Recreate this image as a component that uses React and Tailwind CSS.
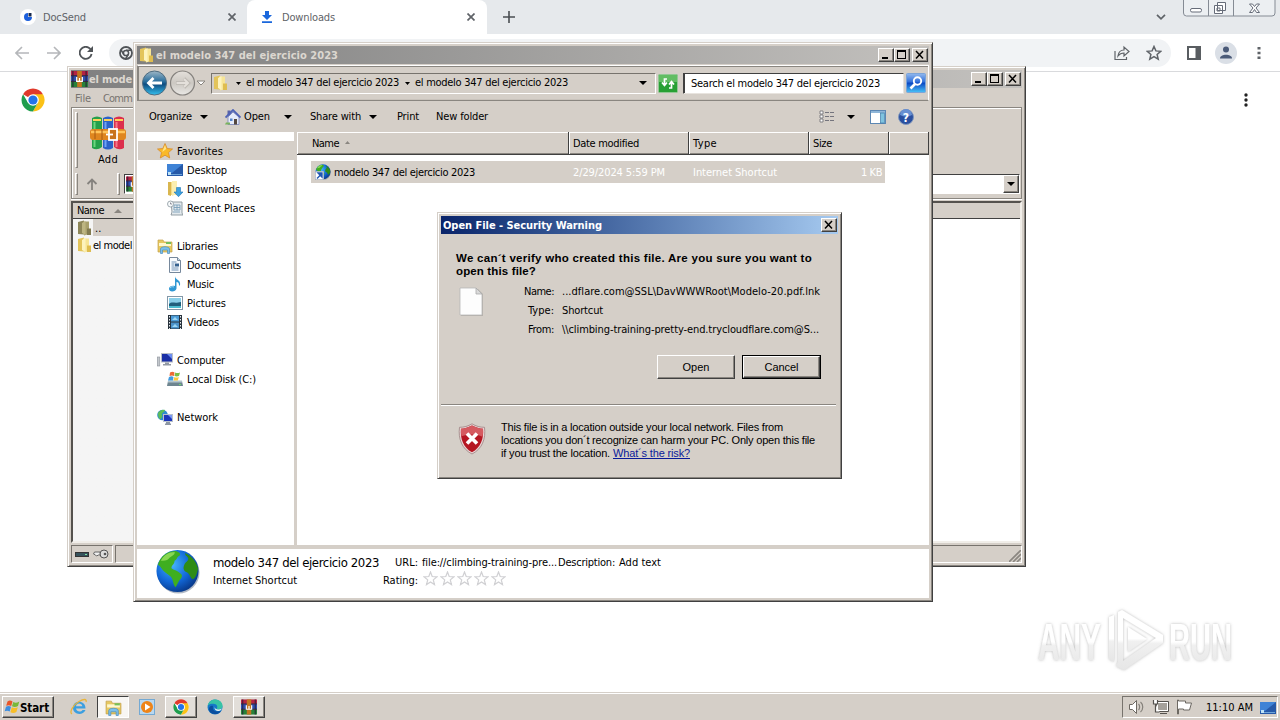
import React, { useLayoutEffect, useRef, useState } from "react";

const raised =
  "border border-t-white border-l-white border-r-[#404040] border-b-[#404040] shadow-[inset_-1px_-1px_0_#8a8680]";
const sunken =
  "border border-t-[#77736d] border-l-[#77736d] border-r-white border-b-white";
const grip =
  "w-[3px] border border-t-white border-l-white border-r-[#8a8680] border-b-[#8a8680]";
const frame =
  "border border-t-[#d5cfc8] border-l-[#d5cfc8] border-r-[#404040] border-b-[#404040] shadow-[inset_1px_1px_0_#fff,inset_-1px_-1px_0_#8a8680] bg-[#d5cfc8] p-[3px]";

// Label with a fixed pixel width: the tracking is adjusted so the text fills it
const Label = ({ w, className = "", children }) => {
  const ref = useRef(null);
  const [spacing, setSpacing] = useState(0);

  useLayoutEffect(() => {
    const natural = ref.current.getBoundingClientRect().width;
    setSpacing((w - natural) / String(children).length);
  }, [w, children]);

  return (
    <span className={`block shrink-0 whitespace-pre ${className}`}>
      <span ref={ref} style={{ letterSpacing: `${spacing}px` }}>
        {children}
      </span>
    </span>
  );
};

const Tri = ({ className = "" }) => (
  <svg viewBox="0 0 8 4" className={`h-1 w-2 shrink-0 ${className}`}>
    <path d="M0 0h8L4 4z" fill="#000" />
  </svg>
);

const ChromeLogo = ({ className = "" }) => (
  <svg viewBox="0 0 24 24" className={`shrink-0 ${className}`}>
    <circle cx="12" cy="12" r="11.5" fill="#fff" />
    <path d="M12 12 2.050 6.250A11.500 11.500 0 0 1 21.950 6.250z" fill="#e0392b" />
    <path d="M12 6.300h10A11.500 11.500 0 0 1 11.900 23.500l5-8.800z" fill="#fbc116" />
    <path d="M7 14.800 2.050 6.250A11.500 11.500 0 0 0 11.900 23.500l5-8.700z" fill="#1f9d4d" />
    <circle cx="12" cy="12" r="5.8" fill="#fff" />
    <circle cx="12" cy="12" r="4.6" fill="#2373e8" />
  </svg>
);

const Folder = ({ className = "", dark = false }) => (
  <svg viewBox="0 0 16 16" className={`h-4 w-4 shrink-0 ${className}`}>
    <path d="M1 2 7 .5v14L1 14z" fill={dark ? "#8d8659" : "#e3c45a"} />
    <path d="M6 1.500h6V14l-5 1.500z" fill={dark ? "#a8a06c" : "#f7e596"} />
    <path d="M5 3 8.500 1v14L5 13z" fill={dark ? "#bdb582" : "#fdf3bd"} />
    <path d="M10 8.500h4V15h-4z" fill={dark ? "#827b50" : "#dfbd50"} />
  </svg>
);

const Books = ({ className = "" }) => (
  <svg viewBox="0 0 36 34" className={`shrink-0 ${className}`}>
    <path d="M2 2q5-3 10 0v29q-5 4-10 1z" fill="#25a04a" />
    <path d="M13 2q5-3 10 0v30q-5 3-10 0z" fill="#2d62c8" />
    <path d="M24 2q5-3 10 0v30q-5 3-10-1z" fill="#dc2f4d" />
    <path d="M3 4h8M14 4h8M25 4h8" stroke="#ffd25b" strokeWidth="2" />
    <path d="M4.500 6v25" stroke="#6bd57e" strokeWidth="2" />
    <path d="M15.500 6v25" stroke="#6fa2f4" strokeWidth="2" />
    <path d="M26.500 6v25" stroke="#f77689" strokeWidth="2" />
    <rect x="0" y="13" width="36" height="11" rx="3" fill="#df861f" />
    <path d="M1 16h34" stroke="#ffc45a" strokeWidth="2.500" />
    <path d="M12 13v11M5 14v9" stroke="#a65a12" strokeWidth="1" />
    <rect x="19" y="13" width="8" height="11" fill="#c8741c" stroke="#fff" strokeWidth="1.800" />
    <path d="M16 18.500h7" stroke="#fff" strokeWidth="1.800" />
  </svg>
);

const BooksFlat = ({ className = "" }) => (
  <svg viewBox="0 0 18 17" className={`shrink-0 ${className}`}>
    <rect x="0" y="0" width="18" height="5" fill="#b32344" />
    <rect x="0" y="5" width="18" height="6" fill="#2f4fae" />
    <rect x="0" y="11" width="18" height="6" fill="#27823a" />
    <path d="M2 0v17M16 0v17" stroke="#231a33" strokeWidth="1" />
    <path d="M0 5h18M0 11h18" stroke="#33203a" strokeWidth="1" />
    <rect x="6.500" y="0" width="5" height="17" fill="#c2761f" />
    <path d="M6 6.500v4.500h6V6.500M9 7.500V11" fill="none" stroke="#fff" strokeWidth="1.300" />
  </svg>
);

const Globe = ({ className = "" }) => (
  <svg viewBox="0 0 46 46" className={`shrink-0 ${className}`}>
    <defs>
      <radialGradient id="sea" cx="0.38" cy="0.35" r="0.68">
        <stop offset="0" stopColor="#46b4fb" />
        <stop offset="0.6" stopColor="#1268d8" />
        <stop offset="1" stopColor="#083a8c" />
      </radialGradient>
    </defs>
    <circle cx="24" cy="24" r="21.5" fill="#64748b" opacity="0.5" />
    <circle cx="23" cy="22.5" r="21.5" fill="url(#sea)" />
    <path d="M3 16C6 6 14 2 21 2c3 1 6 2 4 5-3 1-2 4-5 5 0 4-4 5-3 8 3 2 6 2 9 5 3 2 1 5-1 7-2 3-3 6-4 7-3-3-2-8-5-11-4-3-8-5-10-9-1-2-2-2-3-3z" fill="#3fae20" />
    <path d="M31 4c6 3 11 8 13 16-1 5-2 9-5 11-3-1-3-5-6-7-3-1-5-4-3-8 1-3 4-3 4-6s-4-3-3-6z" fill="#2e8c16" />
    <path d="M6 12C9 6 14 3 20 3c1 3-4 4-6 7-2 2-5 2-8 2z" fill="#a8e868" opacity="0.7" />
  </svg>
);

const LibraryIcon = ({ className = "h-4 w-4" }) => (
  <svg viewBox="0 0 16 16" className={`shrink-0 ${className}`}>
    <path d="M1 2h5l1 2h8v10H1z" fill="#e6c860" stroke="#c3a04b" strokeWidth=".7" />
    <path d="M2 5h12v3H2z" fill="#fff7cc" />
    <path d="M9 4h5v2H9z" fill="#75bf5a" />
    <path d="M3.500 15.500V11c0-3 9-3 9 0v4.500h-2V12h-5v3.500z" fill="#7cc0ea" stroke="#4a8fc4" strokeWidth=".7" />
  </svg>
);

const DesktopIcon = ({ className = "" }) => (
  <svg viewBox="0 0 16 12" className={`h-3 w-4 shrink-0 ${className}`}>
    <rect width="16" height="12" fill="#2659a8" />
    <path d="M0 0h16L5 9H0z" fill="#3f83d6" />
    <path d="M1 10.500h14" stroke="#6fa5da" strokeWidth="1" />
    <rect x="1" y="8" width="3" height="3" fill="#bfe3f7" />
  </svg>
);

const sideIcons = {
  star: (
    <svg viewBox="0 0 16 16" className="h-4 w-4">
      <path d="m8 .5 2.200 5 5.300.5-4 3.600 1.200 5.400L8 12.200 3.300 15l1.200-5.400L.5 6l5.300-.5z" fill="#f9b929" stroke="#d98b2b" strokeWidth=".8" />
      <path d="m8 2 1.200 4-4 3z" fill="#ffe38a" />
    </svg>
  ),
  desktop: <DesktopIcon />,
  downloads: (
    <svg viewBox="0 0 16 16" className="h-4 w-4">
      <path d="M1 1h9v13H1z" fill="#f4dc85" />
      <path d="M1 1h3v14l-3-1z" fill="#d9b64f" />
      <path d="M5 0h5v13l-5 2z" fill="#fbeeb0" />
      <path d="M9.500 6.500h4V11H16l-4.500 4.700L7 11h2.500z" fill="#3ba0df" stroke="#2476b4" strokeWidth=".6" />
    </svg>
  ),
  recent: (
    <svg viewBox="0 0 16 16" className="h-4 w-4">
      <path d="M4 2h11v11l1 2H4l1-3z" fill="#e3e9ed" stroke="#89949b" strokeWidth=".9" />
      <path d="M7 5h6v5H7zM10 5v5M7 7.500h6M6 12h7" stroke="#7b9fba" fill="none" strokeWidth=".9" />
      <circle cx="3.500" cy="4" r="3" fill="#f7fafb" stroke="#8a979e" strokeWidth=".8" />
      <path d="M3.500 2.500V4H5" stroke="#667" fill="none" strokeWidth=".7" />
    </svg>
  ),
  library: <LibraryIcon />,
  documents: (
    <svg viewBox="0 0 16 16" className="h-4 w-4">
      <path d="M2.500.5h8l3 3v12h-11z" fill="#fafcff" stroke="#76889c" />
      <path d="M10.500.5v3h3" fill="#c8dbec" stroke="#76889c" />
      <path d="M4.500 5h5M4.500 7h3M4.500 9h3M4.500 11h7M4.500 13h7" stroke="#6f90b5" />
      <rect x="8" y="6.500" width="4" height="3" fill="#37618f" />
    </svg>
  ),
  music: (
    <svg viewBox="0 0 16 16" className="h-4 w-4">
      <path d="M8 0c0 4 6 3.500 5 9-.5 1-1 1-1 0 0-2-1-3-2.500-3v6.500C9 16 2 17 2 12.800 2 10 5.500 9.200 8 10z" fill="#2e97d4" />
      <path d="M3 12c1-1.500 2.500-1.500 4-1" stroke="#93d3f3" fill="none" />
    </svg>
  ),
  pictures: (
    <svg viewBox="0 0 16 14" className="h-3.5 w-4">
      <rect x=".5" y=".5" width="15" height="13" fill="#fff" stroke="#8398a8" />
      <rect x="2" y="2" width="12" height="10" fill="#89cfe9" />
      <path d="M2 8c3-3 5 0 12-2v6H2z" fill="#205f7c" />
      <path d="M2 10h12v2H2z" fill="#4cbdd0" />
    </svg>
  ),
  videos: (
    <svg viewBox="0 0 16 16" className="h-4 w-4">
      <rect x="1" y="1" width="14" height="14" fill="#29333d" />
      <rect x="4" y="1.500" width="8" height="6" fill="#4b9bd6" />
      <rect x="4" y="8.500" width="8" height="6" fill="#4a92c9" />
      <path d="M5 6l3-3 3 3M5 13l3-3 3 3" fill="#9bd6f4" />
      <path d="M2.500 2v13M13.500 2v13" stroke="#e9eef2" strokeDasharray="1.500 1.500" />
    </svg>
  ),
  computer: (
    <svg viewBox="0 0 16 16" className="h-4 w-4">
      <rect x=".3" y="5" width="2.500" height="9" fill="#c3c7cc" stroke="#8d939b" strokeWidth=".6" />
      <rect x="4" y="1" width="12" height="9.500" fill="#b9bec6" />
      <rect x="5" y="2" width="10" height="7.500" fill="#1a2fa6" />
      <path d="M10 2h5v5z" fill="#6c8df1" />
      <path d="M8 10.500h4V12h2v1.500H6V12h2z" fill="#9299a3" />
    </svg>
  ),
  disk: (
    <svg viewBox="0 0 16 16" className="h-4 w-4">
      <path d="M1 10h14l1 5H0z" fill="#6e8590" />
      <path d="M1 9.500h14v2H1z" fill="#b3c5cd" />
      <path d="M3 1.500c2-1 3-1 4.500 0L7 5C5.500 4.300 4.500 4.300 2.500 5z" fill="#ed6b35" />
      <path d="M8.300 1.500c1.500.8 3 .7 4.700 0L12 5c-1.500.7-3 .6-4.500 0z" fill="#7bbf45" />
      <path d="M2 6c2-1 3-1 4.500 0L6 9.500H1z" fill="#429be0" />
      <path d="M7.300 6c1.500.8 3 .7 4.500 0l-1 3.500H6.500z" fill="#fbc93b" />
      <rect x="12" y="13" width="2" height="1" fill="#69e069" />
    </svg>
  ),
  network: (
    <svg viewBox="0 0 16 16" className="h-4 w-4">
      <circle cx="5.500" cy="6" r="5.300" fill="#2f8cd0" />
      <path d="M1 4c2-3 5-3.500 7-3 0 2-4 3-3 5s-1 4-2 4-2-3-2-6z" fill="#5dbd59" />
      <rect x="6" y="5" width="10" height="8" fill="#b9c1cb" />
      <rect x="7" y="6" width="8" height="6" fill="#1d36bb" />
      <path d="M11 6h4v4z" fill="#7a98f4" />
      <path d="M9 13h4v1.500h1V16H8v-1.500h1z" fill="#8d97a3" />
    </svg>
  ),
};

const sideItems = [
  { icon: "star", text: "Favorites", w: 46, top: true },
  { icon: "desktop", text: "Desktop", w: 40 },
  { icon: "downloads", text: "Downloads", w: 53 },
  { icon: "recent", text: "Recent Places", w: 68 },
  null,
  { icon: "library", text: "Libraries", w: 41, top: true },
  { icon: "documents", text: "Documents", w: 54 },
  { icon: "music", text: "Music", w: 27 },
  { icon: "pictures", text: "Pictures", w: 39 },
  { icon: "videos", text: "Videos", w: 32 },
  null,
  { icon: "computer", text: "Computer", w: 48, top: true },
  { icon: "disk", text: "Local Disk (C:)", w: 69 },
  null,
  { icon: "network", text: "Network", w: 41, top: true },
];

const CaptionButton = ({ kind }) => (
  <div className={`h-[14px] w-4 shrink-0 bg-[#d5cfc8] ${raised}`}>
    <svg viewBox="0 0 14 12" className="h-3 w-3.5" shapeRendering={kind === "close" ? "auto" : "crispEdges"}>
      {kind === "min" && <rect x="3" y="8" width="6" height="2" fill="#000" />}
      {kind === "max" && <path d="M2 1h9v9H2zM3 3v6h7V3z" fillRule="evenodd" fill="#000" />}
      {kind === "close" && <path d="m3 2 7 7.500M10 2 3 9.500" stroke="#000" strokeWidth="1.500" />}
    </svg>
  </div>
);

const CaptionButtons = () => (
  <div className="ml-auto mr-px flex items-center">
    <CaptionButton kind="min" />
    <CaptionButton kind="max" />
    <div className="w-0.5" />
    <CaptionButton kind="close" />
  </div>
);

const Browser = () => (
  <div className="flex h-[692px] flex-col bg-white text-[#5f6368]">
    {/* Tab strip */}
    <div className="flex h-[34px] shrink-0 bg-[#e6e9ec]">
      <div className="flex w-[247px] items-center rounded-br-lg pl-5">
        <div className="flex h-4 w-4 items-center justify-center rounded-full bg-white">
          <svg viewBox="0 0 10 10" className="h-2.5 w-2.5">
            <path d="M5 1a4 4 0 1 0 4 4H5z" fill="#1b5fdc" />
            <path d="M5.500 1h3v3.500h-3z" fill="#16284c" />
          </svg>
        </div>
        <Label w={43} className="ml-[7px] pt-0.5">DocSend</Label>
        <svg viewBox="0 0 8 8" className="ml-auto mr-[11px] h-2 w-2">
          <path d="m.5.5 7 7m0-7-7 7" stroke="#5f6368" strokeWidth="1.700" />
        </svg>
      </div>
      <div className="flex w-60 items-center rounded-t-lg bg-white pl-[14px]">
        <svg viewBox="0 0 12 12" className="h-3 w-3">
          <path d="M4 0h4v4h3L6 9 1 4h3zM1 10.300h10V12H1z" fill="#1a67dc" />
        </svg>
        <Label w={53} className="ml-[9px] pt-0.5">Downloads</Label>
        <svg viewBox="0 0 8 8" className="ml-auto mr-[12px] h-2 w-2">
          <path d="m.5.5 7 7m0-7-7 7" stroke="#5f6368" strokeWidth="1.700" />
        </svg>
      </div>
      <svg viewBox="0 0 12 12" className="ml-4 mt-[11px] h-3 w-3">
        <path d="M6 0v12M0 6h12" stroke="#4a4e52" strokeWidth="1.600" />
      </svg>
      <svg viewBox="0 0 10 6" className="ml-auto mr-[17px] mt-[14px] h-1.5 w-2.5">
        <path d="m1 .8 4 4 4-4" fill="none" stroke="#5f6368" strokeWidth="1.700" />
      </svg>
      <svg viewBox="0 0 93 17" className="mr-1 h-[17px] w-[93px]">
        <path d="M.5-3V13q0 3 3 3H89q3 0 3-3V-3M25.500 0v16M50.500 0v16" fill="#eceff2" stroke="#858b94" />
        <rect x="7.500" y="8.500" width="11" height="3.500" rx="1.500" fill="#fff" stroke="#666c79" />
        <path d="M34.500 2.500h8v8h-8zM31.500 5.500h8v8h-8zM34 8h3v3h-3z" fill="#fff" stroke="#666c79" />
        <path d="m66.500 4 3 0 2 2.500 2-2.500h3l-3.500 4 3.500 4.500h-3l-2-3-2 3h-3l3.500-4.500z" fill="#fff" stroke="#666c79" />
      </svg>
    </div>

    {/* Toolbar */}
    <div className="flex h-[38px] shrink-0 items-center border-b border-[#d9dadd]">
      <svg viewBox="0 0 14 14" className="ml-[15px] h-3.5 w-3.5">
        <path d="M14 7H1.500M7 1 1 7l6 6" fill="none" stroke="#b5b7ba" strokeWidth="1.600" />
      </svg>
      <svg viewBox="0 0 14 14" className="ml-[18px] h-3.5 w-3.5">
        <path d="M0 7h12.500M7 1l6 6-6 6" fill="none" stroke="#b5b7ba" strokeWidth="1.600" />
      </svg>
      <svg viewBox="0 0 14 14" className="ml-[18px] h-3.5 w-3.5">
        <path d="M12.600 8A6 6 0 1 1 11 2.600L13 4.500" fill="none" stroke="#505458" strokeWidth="1.800" />
        <path d="M14 0v6H8z" fill="#505458" />
      </svg>
      <div className="ml-4 flex h-7 w-[1062px] items-center rounded-full bg-[#f1f3f5] pl-2.5">
        <svg viewBox="0 0 14 14" className="h-3.5 w-3.5">
          <circle cx="7" cy="7" r="6" fill="none" stroke="#505458" strokeWidth="1.800" />
          <circle cx="7" cy="7" r="2.600" fill="none" stroke="#505458" strokeWidth="1.500" />
          <path d="M7 4.300h6M4.800 8.500l-3-5M9.200 8.500l-3 5" stroke="#505458" strokeWidth="1.500" />
        </svg>
        <svg viewBox="0 0 16 16" className="ml-auto mr-4 h-4 w-4">
          <path d="M1 6v8.500h11.500V12M4 11c.5-4 2.500-6 6-6V2l5 4.500-5 4.500V8C7.500 8 5.500 9 4 11z" fill="none" stroke="#5f6368" strokeWidth="1.200" />
        </svg>
        <svg viewBox="0 0 16 16" className="mr-[9px] h-4 w-4">
          <path d="m8 1.500 1.900 4.400 4.800.4-3.600 3.200 1.100 4.700L8 11.700l-4.200 2.500 1.100-4.700-3.600-3.200 4.800-.4z" fill="none" stroke="#5f6368" strokeWidth="1.500" />
        </svg>
      </div>
      <svg viewBox="0 0 14 14" className="ml-4 h-3.5 w-3.5">
        <path d="M0 0h14v14H0zM2 2v10h6.500V2z" fillRule="evenodd" fill="#595d61" />
      </svg>
      <svg viewBox="0 0 22 22" className="ml-[14px] h-[22px] w-[22px]">
        <circle cx="11" cy="11" r="11" fill="#dadfe6" />
        <circle cx="11" cy="7.500" r="3" fill="#4a5a78" />
        <path d="M5 16.500c0-5 12-5 12 0z" fill="#4a5a78" />
      </svg>
      <svg viewBox="0 0 4 14" className="ml-5 h-3.5 w-1">
        <path d="M.5 1h3v2.500h-3zM.5 5.800h3v2.500h-3zM.5 10.600h3V13h-3z" fill="#5f6368" />
      </svg>
    </div>

    {/* Page */}
    <div className="flex h-14 items-center justify-between pl-[21px] pr-8">
      <ChromeLogo className="h-6 w-6" />
      <svg viewBox="0 0 4 14" className="h-3.5 w-1">
        <path d="M2 2v.01M2 7v.01M2 12v.01" stroke="#222" strokeWidth="3.400" strokeLinecap="round" />
      </svg>
    </div>
  </div>
);

const ArchiveWindow = () => (
  <div className={`absolute left-[67px] top-[66px] flex h-[501px] w-[959px] flex-col ${frame}`}>
    <div className="flex h-[18px] shrink-0 items-center bg-gradient-to-r from-[#808080] to-[#c3c1be]">
      <BooksFlat className="h-[16px] w-[17px]" />
      <Label w={43} className="ml-px pt-px font-bold text-[#dcd7d0]">el mode</Label>
      <CaptionButtons />
    </div>
    <div className="flex h-[19px] shrink-0 items-center pl-1 pt-0.5 text-[#77736f]">
      <Label w={16}>File</Label>
      <Label w={29} className="ml-3">Comm</Label>
    </div>
    <div className="flex h-[92px] shrink-0 flex-col border border-[#8a8680] pl-[3px] shadow-[inset_1px_1px_0_#fff,0_1px_0_#fff]">
      <div className="flex h-[60px] pt-[4px]">
        <div className={`h-14 ${grip}`} />
        <div className="ml-[12px] flex flex-col items-center pt-1">
          <Books className="h-[34px] w-9" />
          <Label w={20} className="mt-[3px] text-black">Add</Label>
        </div>
      </div>
      <div className="flex h-[28px] items-center pt-[3px]">
        <div className={`h-[22px] ${grip}`} />
        <svg viewBox="0 0 12 12" className="ml-[8px] h-3 w-3">
          <path d="M6 12V2M1.500 6 6 1.500 10.500 6" fill="none" stroke="#85827e" strokeWidth="1.800" />
        </svg>
        <div className={`ml-[19px] h-[22px] ${grip}`} />
        <div className="ml-[4px] flex h-5 w-[896px] items-center justify-between border border-t-[#404040] border-l-[#404040] border-r-white border-b-white bg-white pl-px">
          <BooksFlat className="h-4 w-4" />
          <div className={`flex h-[18px] w-4 items-center justify-center bg-[#d5cfc8] ${raised}`}>
            <Tri />
          </div>
        </div>
      </div>
    </div>
    <div className="mt-[2px] flex h-[342px] shrink-0 flex-col border-2 border-t-[#55524e] border-l-[#55524e] border-r-[#f1eee9] border-b-[#f1eee9] bg-white">
      <div className="flex h-4 shrink-0 items-center border-b border-[#404040] bg-[#d5cfc8] pl-1 text-black">
        <Label w={27} className="pt-px">Name</Label>
        <svg viewBox="0 0 8 4" className="ml-[10px] h-1 w-2">
          <path d="M0 4h8L4 0z" fill="#8a8680" />
        </svg>
      </div>
      <div className="flex-1 bg-gradient-to-r from-[#f5f5f5] from-50% to-white to-50% text-black">
        <div className="flex h-[17px] items-center pl-1">
          <Folder dark />
          <div className="flex h-[17px] w-60 items-center bg-[#d5cfc8] pl-[2px] pt-0.5">..</div>
        </div>
        <div className="flex h-[18px] items-center pl-1">
          <Folder />
          <Label w={39} className="pt-px">el model</Label>
        </div>
      </div>
    </div>
    <div className="mt-[2px] flex h-[18px] shrink-0">
      <div className={`flex w-[42px] items-center gap-1 pl-[3px] ${sunken}`}>
        <svg viewBox="0 0 14 5" className="h-[5px] w-3.5">
          <rect x=".5" y=".5" width="13" height="4" fill="#35515b" stroke="#333" />
          <path d="M10 2.500h2" stroke="#7ee0a0" />
        </svg>
        <svg viewBox="0 0 16 10" className="h-2.5 w-4">
          <circle cx="11" cy="5" r="4" fill="#ddd" stroke="#555" />
          <circle cx="12" cy="5" r="1.300" fill="#555" />
          <path d="M7 3H1.500L.5 5l2 1 1 1 2-1H7z" fill="#eee" stroke="#666" />
        </svg>
      </div>
      <div className={`ml-[2px] w-[440px] ${sunken}`} />
      <div className={`ml-[2px] flex flex-1 items-end justify-end ${sunken}`}>
        <svg viewBox="0 0 12 12" className="h-3 w-3">
          <path d="M0 12 12 0M4 12l8-8M8 12l4-4" stroke="#8a8680" strokeWidth="1.600" />
        </svg>
      </div>
    </div>
  </div>
);

const AddressBar = () => (
  <div className="mt-px flex h-9 shrink-0 items-center border border-t-white border-l-[#8a8680] border-r-white border-b-[#8a8680] pl-[4px] shadow-[inset_1px_1px_0_#8a8680,inset_0_-1px_0_#c9c3bc]">
    <svg viewBox="0 0 66 26" className="h-[26px] w-[66px] shrink-0">
      <defs>
        <linearGradient id="back" x1="0" y1="0" x2="0" y2="1">
          <stop offset="0" stopColor="#9fb7c6" />
          <stop offset="0.45" stopColor="#266c9c" />
          <stop offset="0.55" stopColor="#0e4c80" />
          <stop offset="1" stopColor="#35c0ef" />
        </linearGradient>
        <linearGradient id="fwd" x1="0" y1="0" x2="0" y2="1">
          <stop offset="0" stopColor="#e4e0db" />
          <stop offset="0.5" stopColor="#ccc8c2" />
          <stop offset="1" stopColor="#eae8e5" />
        </linearGradient>
      </defs>
      <circle cx="12.500" cy="13" r="12" fill="url(#back)" stroke="#4f6c80" />
      <path d="M20 13H7M11.500 8 6.500 13l5 5" fill="none" stroke="#fff" strokeWidth="2.800" />
      <circle cx="40.500" cy="13" r="12" fill="url(#fwd)" stroke="#85827e" strokeWidth="1.200" />
      <path d="M34 13h12M42 8.500l4.500 4.500-4.500 4.500" fill="none" stroke="#bcb8b2" strokeWidth="3.400" />
      <path d="M34.500 13h11M42 9l4 4-4 4" fill="none" stroke="#e4e0db" strokeWidth="2" />
      <path d="M55 11h8l-4 4z" fill="#fff" stroke="#8a8680" />
    </svg>
    <div className={`ml-[3px] flex h-[21px] w-[445px] shrink-0 items-center ${sunken}`}>
      <Folder className="ml-px" />
      <svg viewBox="0 0 5 3" className="ml-[7px] h-[3px] w-[5px]"><path d="M0 0h5L2.500 3z" /></svg>
      <Label w={153} className="ml-[5px]">el modelo 347 del ejercicio 2023</Label>
      <svg viewBox="0 0 5 3" className="ml-[6px] h-[3px] w-[5px]"><path d="M0 0h5L2.500 3z" /></svg>
      <Label w={153} className="ml-[5px]">el modelo 347 del ejercicio 2023</Label>
      <Tri className="ml-auto mr-[8px]" />
    </div>
    <svg viewBox="0 0 20 19" className="ml-[2px] h-[19px] w-5 shrink-0">
      <rect x=".5" y=".5" width="19" height="18" rx="1" fill="#28a034" stroke="#92c894" />
      <path d="M1 1h18v7H1z" fill="#62bd63" />
      <path d="M9 5H6.500v6M4 8.500 6.500 11.500 9 8.500M11 14h2.500V8M11 10.500l2.500-3 2.500 3" fill="none" stroke="#fff" strokeWidth="1.700" />
    </svg>
    <div className="ml-[5px] flex h-[21px] w-[221px] shrink-0 items-center border border-t-[#404040] border-l-[#404040] border-r-[#e8e4df] border-b-[#e8e4df] bg-white pl-[7px] pt-0.5 shadow-[inset_1px_0_0_#404040]">
      <Label w={189}>Search el modelo 347 del ejercicio 2023</Label>
    </div>
    <svg viewBox="0 0 20 20" className="ml-[2px] h-5 w-5 shrink-0">
      <defs>
        <linearGradient id="find" x1="0" y1="0" x2="0" y2="1">
          <stop offset="0" stopColor="#93b9ee" />
          <stop offset="0.45" stopColor="#2f6fda" />
          <stop offset="0.5" stopColor="#0a46c2" />
          <stop offset="1" stopColor="#48c3f8" />
        </linearGradient>
      </defs>
      <rect x=".5" y=".5" width="19" height="19" rx="1" fill="url(#find)" stroke="#7ca4d8" />
      <circle cx="11.500" cy="8" r="3.700" fill="none" stroke="#fff" strokeWidth="1.900" />
      <path d="m9 11-4.500 4.500" stroke="#fff" strokeWidth="2.600" />
    </svg>
  </div>
);

const CommandBar = () => (
  <div className="flex h-[31px] shrink-0 items-center pl-[12px]">
    <Label w={43}>Organize</Label>
    <Tri className="ml-2" />
    <svg viewBox="0 0 16 16" className="ml-[17px] h-4 w-4 shrink-0">
      <path d="M2.500 1.500h3v5h-3z" fill="#5964a8" />
      <path d="M3 8 8 3l6 5v7.500H3z" fill="#e6ecfa" stroke="#7681b8" strokeWidth=".8" />
      <path d="M.5 8.500 8 1l7.500 7.500" fill="none" stroke="#4f63b6" strokeWidth="1.800" />
      <path d="M9 10h3v5.500H9z" fill="#554840" />
      <path d="M5 9.500h2.500V12H5z" fill="#5685cb" />
      <path d="M0 15.500h5v-2H1z" fill="#79b35d" />
    </svg>
    <Label w={26} className="ml-[3px]">Open</Label>
    <Tri className="ml-[14px]" />
    <Label w={51} className="ml-[18px]">Share with</Label>
    <Tri className="ml-2" />
    <Label w={22} className="ml-5">Print</Label>
    <Label w={52} className="ml-[17px]">New folder</Label>
    <svg viewBox="0 0 16 13" className="ml-auto mr-[12px] h-[13px] w-4">
      <path d="M1 1h3v3H1zM1 5h3v3H1zM1 9h3v3H1z" fill="#fff" stroke="#77777c" strokeWidth=".9" />
      <path d="M6 2.500h4M11 2.500h4M6 6.500h4M11 6.500h4M6 10.500h4M11 10.500h4" stroke="#74747d" />
    </svg>
    <Tri className="mr-[15px]" />
    <svg viewBox="0 0 16 14" className="mr-[12px] h-3.5 w-4">
      <rect x=".5" y=".5" width="15" height="13" fill="#fff" stroke="#5c87b3" />
      <path d="M1 2h14" stroke="#8fb6d8" strokeWidth="2" />
      <rect x="10.500" y="3" width="4" height="10" fill="#7fc3df" stroke="#3f7ba8" strokeWidth=".7" />
    </svg>
    <svg viewBox="0 0 16 16" className="mr-[15px] h-4 w-4">
      <circle cx="8" cy="8" r="7.500" fill="#2a4f9f" stroke="#7f97bd" />
      <path d="M2 6a6 6 0 0 1 12 0c-4 2-8 2-12 0z" fill="#678fd2" />
      <text x="8" y="12.500" textAnchor="middle" fontSize="12" fontWeight="700" fill="#fff">?</text>
    </svg>
  </div>
);

const columns = [
  { text: "Date modified", w: 66, className: "w-[120px]" },
  { text: "Type", w: 24, className: "w-[120px]" },
  { text: "Size", w: 19, className: "w-20" },
];

const ExplorerWindow = () => (
  <div className={`absolute left-[133px] top-[42px] flex h-[560px] w-[800px] flex-col text-black ${frame}`}>
    <div className="flex h-[18px] shrink-0 items-center bg-gradient-to-r from-[#808080] to-[#c3c1be]">
      <Folder className="ml-[2px]" />
      <Label w={182} className="ml-[1px] pt-px font-bold text-[#dcd7d0]">el modelo 347 del ejercicio 2023</Label>
      <CaptionButtons />
    </div>
    <AddressBar />
    <CommandBar />

    <div className="flex h-[413px] shrink-0 bg-white">
      {/* Navigation pane */}
      <div className="w-[157px] shrink-0 pt-[9px]">
        {sideItems.map((item, i) =>
          item ? (
            <div
              key={i}
              className={`ml-px flex h-[19px] items-center ${item.top ? "pl-[19px]" : "pl-[29px]"} ${i === 0 ? "bg-[#d5cfc8]" : ""}`}
            >
              <div className="flex w-4 justify-center">{sideIcons[item.icon]}</div>
              <Label w={item.w} className="ml-[4px] pt-0.5">{item.text}</Label>
            </div>
          ) : (
            <div key={i} className="h-[19px]" />
          )
        )}
      </div>
      <div className="w-[3px] shrink-0 bg-[#d5cfc8]" />

      {/* File list */}
      <div className="min-w-0 flex-1">
        <div className="flex h-[23px] border-b border-[#404040] bg-[#d5cfc8] shadow-[inset_0_1px_0_#fff,inset_0_-1px_0_#8a8680]">
          <div className="flex w-[272px] items-center border-l border-r border-l-white border-r-[#404040] pl-[14px] pt-0.5">
            <Label w={27}>Name</Label>
            <svg viewBox="0 0 5 3" className="mb-1 ml-[6px] h-[3px] w-[5px]">
              <path d="M0 3h5L2.500 0z" fill="#8a8680" />
            </svg>
          </div>
          {columns.map((col) => (
            <div key={col.text} className={`flex items-center border-l border-r border-l-white border-r-[#404040] pl-[3px] pt-0.5 ${col.className}`}>
              <Label w={col.w}>{col.text}</Label>
            </div>
          ))}
          <div className="flex-1 border-l border-r border-l-white border-r-[#404040]" />
        </div>
        <div className="ml-[14px] mt-[6px] flex h-[22px] w-[574px] items-center bg-[#d5cfc8] pl-[4px]">
          <div className="relative h-4 w-4 shrink-0">
            <Globe className="h-4 w-4" />
            <svg viewBox="0 0 9 9" className="absolute bottom-0 left-0 h-[9px] w-[9px]">
              <rect x=".3" y=".3" width="8.400" height="8.400" fill="#fff" stroke="#9ab" strokeWidth=".6" />
              <path d="M2 7.500 5 4.500M3 2h4v4z" fill="#2157b4" stroke="#2157b4" strokeWidth="1.400" />
            </svg>
          </div>
          <Label w={141} className="ml-[3px] pt-0.5">modelo 347 del ejercicio 2023</Label>
          <Label w={92} className="ml-[98px] pt-0.5 text-white">2/29/2024 5:59 PM</Label>
          <Label w={84} className="ml-[28px] pt-0.5 text-white">Internet Shortcut</Label>
          <Label w={21} className="ml-auto mr-[3px] pt-0.5 text-white">1 KB</Label>
        </div>
      </div>
    </div>

    <div className="h-1 shrink-0 bg-[#d5cfc8]" />

    {/* Details pane */}
    <div className="flex flex-1 bg-white">
      <Globe className="ml-[18px] h-[45px] w-[45px]" />
      <div className="ml-[13px] pt-[5px]">
        <div className="flex h-[18px] items-center">
          <Label w={166} className="text-[13px]">modelo 347 del ejercicio 2023</Label>
          <Label w={23} className="ml-4">URL:</Label>
          <Label w={135} className="ml-[4px]">file://climbing-training-pre...</Label>
          <Label w={57} className="ml-[1px]">Description:</Label>
          <Label w={42} className="ml-[4px]">Add text</Label>
        </div>
        <div className="flex h-[18px] items-center">
          <Label w={84}>Internet Shortcut</Label>
          <Label w={35} className="ml-[86px]">Rating:</Label>
          <div className="mb-[5px] ml-[5px] flex gap-[2px]">
            {[1, 2, 3, 4, 5].map((n) => (
              <svg key={n} viewBox="0 0 15 15" className="h-[15px] w-[15px]">
                <path d="m7.500 1 1.700 4.500 4.800.3-3.700 3.100 1.200 4.700-4-2.600-4 2.600 1.200-4.700L1 5.800l4.800-.3z" fill="#fff" stroke="#d0d0d3" strokeWidth="1.200" />
              </svg>
            ))}
          </div>
        </div>
      </div>
    </div>
  </div>
);

const fileInfo = [
  { name: "Name:", nw: 30, value: "...dflare.com@SSL\\DavWWWRoot\\Modelo-20.pdf.lnk", w: 258 },
  { name: "Type:", nw: 26, value: "Shortcut", w: 41 },
  { name: "From:", nw: 26, value: "\\\\climbing-training-pretty-end.trycloudflare.com@S...", w: 257 },
];

const WarningDialog = () => (
  <div className={`absolute left-[437px] top-[212px] flex h-[267px] w-[405px] flex-col text-black ${frame}`}>
    <div className="flex h-[18px] shrink-0 items-center bg-gradient-to-r from-[#0a246a] to-[#a6caf0] pl-[2px]">
      <Label w={159} className="pt-px font-bold text-white">Open File - Security Warning</Label>
      <div className="ml-auto mr-px"><CaptionButton kind="close" /></div>
    </div>

    <div className="flex h-[170px] shrink-0 flex-col pl-[15px] pt-[18px]">
      <div className="font-['Liberation_Sans',sans-serif] text-[11.5px] font-bold leading-[13px]">
        <Label w={356}>We can´t verify who created this file. Are you sure you want to</Label>
        <Label w={80}>open this file?</Label>
      </div>
      <div className="mt-[4px] flex">
        <svg viewBox="0 0 24 30" className="ml-[3px] mt-[5px] h-[30px] w-6">
          <path d="M2 2h17l5 5v22H2z" fill="#98938d" opacity=".5" />
          <path d="M1 1h16l6 6v21H1z" fill="#fdfdfd" stroke="#b6b6b6" strokeWidth=".8" />
          <path d="M17 1v6h6z" fill="#dadada" stroke="#aaa" strokeWidth=".8" />
        </svg>
        <div className="ml-[20px]">
          {fileInfo.map((row) => (
            <div key={row.name} className="flex h-[19px] items-center">
              <div className="flex w-[51px] justify-end"><Label w={row.nw}>{row.name}</Label></div>
              <Label w={row.w} className="ml-2">{row.value}</Label>
            </div>
          ))}
        </div>
      </div>
      <div className="mt-[16px] flex gap-[7px] pl-[201px] font-['Liberation_Sans',sans-serif]">
        <button className={`flex h-6 w-[78px] items-center justify-center ${raised}`}>
          <Label w={27}>Open</Label>
        </button>
        <div className="border border-black">
          <button className={`flex h-[22px] w-[77px] items-center justify-center ${raised}`}>
            <Label w={34}>Cancel</Label>
          </button>
        </div>
      </div>
    </div>
    <div className="mr-[2px] h-[2px] shrink-0 border-b border-t border-b-white border-t-[#8a8680]" />

    <div className="flex pl-[17px] pt-[15px]">
      <svg viewBox="0 0 28 32" className="mt-[2px] h-8 w-7">
        <path d="M14 .8c4 2.500 8 3.500 12.500 3.500C28 16 24 26 14 31 4 26 0 16 1.500 4.300 6 4.300 10 3.300 14 .8z" fill="#e9d6d6" stroke="#9c8080" strokeWidth=".8" />
        <path d="M14 2.500c4 2 7 3 11 3.200C26 16 22.500 24.500 14 29.300 5.500 24.500 2 16 3 5.700c4-.2 7-1.200 11-3.200z" fill="#b51622" />
        <path d="M14 2.500c4 2 7 3 11 3.200.2 4 0 6-.5 8-6-3-14-3-21-.5C3 11 2.800 9 3 5.700c4-.2 7-1.200 11-3.200z" fill="#d55a60" />
        <path d="m9 10.500 10 10m0-10-10 10" stroke="#fff" strokeWidth="3.600" />
      </svg>
      <div className="ml-[15px] font-['Liberation_Sans',sans-serif] leading-[13px]">
        <Label w={282}>This file is in a location outside your local network. Files from</Label>
        <Label w={314}>locations you don´t recognize can harm your PC. Only open this file</Label>
        <div className="flex">
          <Label w={109}>if you trust the location.</Label>
          <Label w={77} className="ml-[3px] text-[#0a1a9a] underline">What´s the risk?</Label>
        </div>
      </div>
    </div>
  </div>
);

const Watermark = () => (
  <svg viewBox="0 0 230 84" className="absolute left-[1030px] top-[598px] h-[84px] w-[230px]">
    <defs>
      <linearGradient id="mark" x1="0" y1="0" x2="0" y2="1">
        <stop offset="0.5" stopColor="#ffffff" />
        <stop offset="0.56" stopColor="#f0f0f0" />
        <stop offset="1" stopColor="#e6e6e6" />
      </linearGradient>
      <filter id="halo" x="-20%" y="-20%" width="140%" height="140%">
        <feDropShadow dx="0" dy="0" stdDeviation="1.6" floodColor="#888" floodOpacity="0.6" />
      </filter>
    </defs>
    <g filter="url(#halo)" fill="url(#mark)" fontFamily="Liberation Sans, sans-serif" fontSize="52" fontWeight="700">
      <text x="8" y="62" textLength="63" lengthAdjust="spacingAndGlyphs">ANY</text>
      <text x="139" y="62" textLength="63" lengthAdjust="spacingAndGlyphs">RUN</text>
      <path fillRule="evenodd" d="m92 12 41 25v8L94 72l-8-4 2-4V14zM93 20v43l33-23z" />
      <path d="m98 29 19 12-19 13zM79 19l5-2v47l-5-3z" />
    </g>
  </svg>
);

const Taskbar = () => (
  <div className="flex h-7 items-center border-t border-[#d5cfc8] bg-[#d5cfc8] shadow-[inset_0_1px_0_#fff] pb-[2px] pl-0.5 pr-0.5 pt-[3px] text-black">
    <div className={`flex h-[22px] w-[52px] items-center ${raised}`}>
      <svg viewBox="0 0 16 16" className="ml-px h-4 w-4 shrink-0">
        <path d="M3.500 2.500c2-1.500 3.500-1 5 0L7.200 7c-1.700-1-3-1-5-.2z" fill="#e8562a" />
        <path d="M9.300 3c1.700 1 3.500 1 6-.5L14 7c-2 1.200-4 1.200-6 .3z" fill="#78b83a" />
        <path d="M2 7.800c2-1 3.500-.8 5 0L5.700 12.500c-1.700-1-3.200-1-5-.2z" fill="#3d8ee0" />
        <path d="M7.800 8.300c1.800 1 4 1 6 0L12.400 13c-2 1.200-4 1.200-6 .2z" fill="#f8be28" />
      </svg>
      <Label w={29} className="pt-px text-[11.5px] font-bold">Start</Label>
    </div>
    <svg viewBox="0 0 18 18" className="ml-[16px] h-[18px] w-[18px]">
      <path d="M15.500 10.500H6c.5 3.500 5 4 6.500 1.500h3C13 18 3 17 3 9.800 3 2 15.500 1.500 15.500 10.500zM6 8.300h6.300C12 4.600 6.300 4.600 6 8.300z" fill="#3b9fe0" />
      <path d="M2 16c-3-2 1-9 7-12.500 5-3 8-2.500 7 .5" fill="none" stroke="#e9b53c" strokeWidth="1.300" />
    </svg>
    <div className="ml-[9px] flex h-[22px] w-8 items-center justify-center border border-t-[#404040] border-l-[#404040] border-r-white border-b-white bg-[#f8f6f3]">
      <LibraryIcon className="h-[17px] w-[17px]" />
    </div>
    <svg viewBox="0 0 16 16" className="ml-[10px] h-4 w-4">
      <rect x=".5" y=".5" width="15" height="15" fill="#b9d8f0" stroke="#74a9d3" />
      <circle cx="8" cy="8" r="6" fill="#ee8418" />
      <path d="m6 4.500 5.500 3.500L6 11.500z" fill="#fff" />
    </svg>
    <div className={`ml-[10px] flex h-[22px] w-8 items-center justify-center bg-[#e2ded9] ${raised}`}>
      <ChromeLogo className="h-4 w-4" />
    </div>
    <svg viewBox="0 0 16 16" className="ml-[10px] h-4 w-4">
      <circle cx="8" cy="8" r="7.500" fill="#1577c8" />
      <path d="M.5 7C2 1 7 0 10 .8c4 1 6 4 5.500 7-1 3-4.500 3-6 2 2-2 0-5-3-5C4 4.800 2 5 .5 7z" fill="#37c3a6" />
      <path d="M6 7c-1 4 2 6.500 8 5-4 5-11 3.500-12-1-.5-3 2-5 4-4z" fill="#0c4e9e" />
      <path d="M7.500 7.500c0 3 4 4 7.500 2-2 4-8 3.500-7.500-2z" fill="#e5efef" />
    </svg>
    <div className={`ml-[10px] flex h-[22px] w-8 items-center justify-center bg-[#e2ded9] ${raised}`}>
      <BooksFlat className="h-4 w-4" />
    </div>

    <div className={`ml-auto flex h-[22px] w-[156px] items-center pl-[5px] ${sunken}`}>
      <svg viewBox="0 0 18 16" className="h-4 w-[18px]">
        <path d="M1.500 5.500h3l4-4v13l-4-4h-3z" fill="#fff" stroke="#6d6963" />
        <path d="M10.500 5c1.500 1.500 1.500 4.500 0 6M12.500 3c3 2.500 3 7.500 0 10" fill="none" stroke="#85817b" strokeWidth="1.200" />
      </svg>
      <svg viewBox="0 0 17 16" className="ml-[6px] h-4 w-[17px]">
        <rect x="5.500" y="3.500" width="10" height="8" fill="#a5a19b" stroke="#fff" />
        <path d="M4.500 2.500h12v10h-12zM8 14.500h7" fill="none" stroke="#55524e" />
        <path d="M1.500 1v4h4V1M3.500 5v8h4" fill="#fff" stroke="#55524e" strokeWidth="1.200" />
      </svg>
      <svg viewBox="0 0 17 16" className="ml-[7px] h-4 w-[17px]">
        <path d="M1.500 1v14h1V10h5v1h6l2-7-6 0V2h-7V1z" fill="#fff" stroke="#6d6963" />
      </svg>
      <Label w={47} className="ml-[13px] pt-0.5">11:10 AM</Label>
      <DesktopIcon className="ml-[7px] mt-px" />
    </div>
  </div>
);

export default function App() {
  return (
    <div className="relative h-[720px] w-[1280px] overflow-hidden bg-white font-['DejaVu_Sans_Condensed','DejaVu_Sans',sans-serif] text-[11px] leading-[14px]">
      <Browser />
      <ArchiveWindow />
      <ExplorerWindow />
      <WarningDialog />
      <Watermark />
      <Taskbar />
    </div>
  );
}
